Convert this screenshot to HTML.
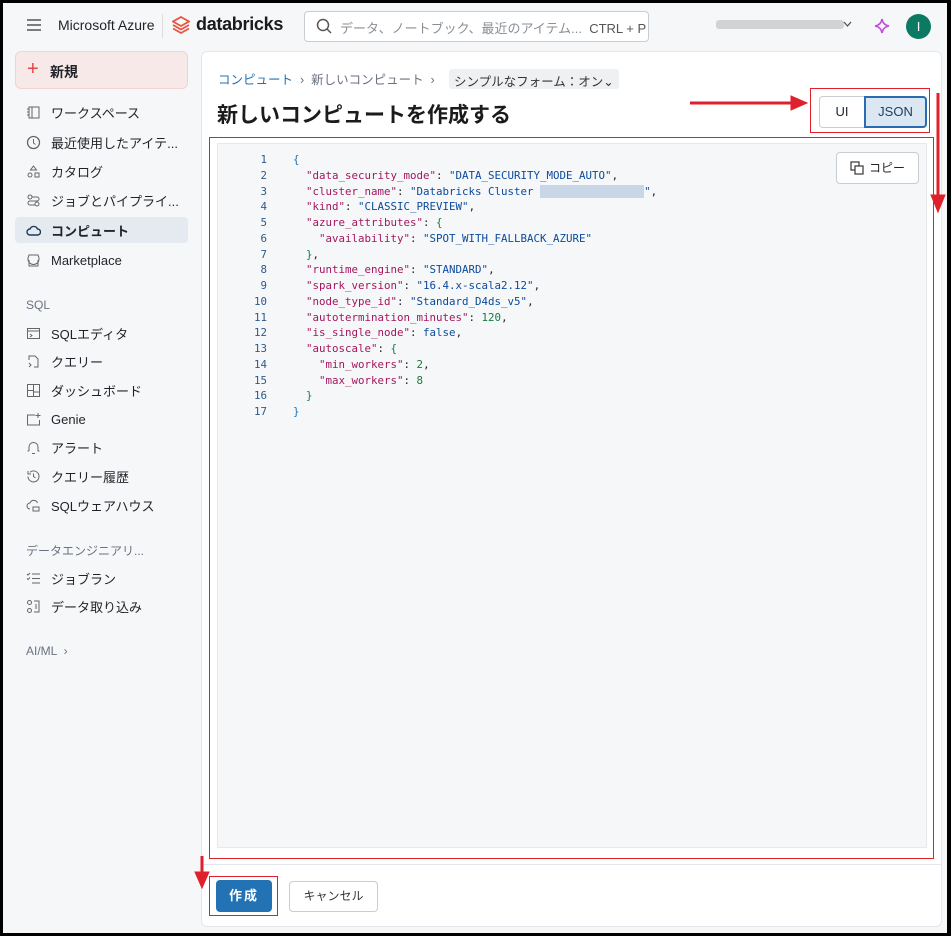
<!DOCTYPE html>
<html><head><meta charset="utf-8"><style>
*{box-sizing:border-box;margin:0;padding:0}
body{width:951px;height:936px;background:#000;font-family:"Liberation Sans","Noto Sans CJK JP",sans-serif;position:relative;overflow:hidden;color:#1f2328}
.frame{position:absolute;left:3px;top:3px;width:944px;height:930px;background:#f6f7f9}
.a{position:absolute}
.nav{position:absolute;left:26px;font-size:13px;color:#1f2328;display:flex;align-items:center;gap:10px;height:28px}
.nav svg{width:15px;height:15px;flex:none}
.sec{position:absolute;left:26px;font-size:12px;color:#6b7280}
.code{position:absolute;left:217px;top:143px;width:710px;height:705px;background:#f6f7f9;border:1px solid #e6e8eb}
.ln{position:absolute;left:0;width:50px;text-align:right;color:#2b5a8c}
.cl{position:absolute;left:76px;white-space:pre;color:#1f2328}
.k{color:#a3175e}.s{color:#0b4a9a}.n{color:#167a3f}.b{color:#2272b4}
.red{position:absolute;border:1px solid #e0202a}
</style></head><body>
<div class="frame"></div>
<svg class="a" style="left:27px;top:19px" width="14" height="12"><path d="M0 1h14M0 6h14M0 11h14" stroke="#555" stroke-width="1.5"/></svg>
<div class="a" style="left:58px;top:17px;font-size:14px">Microsoft Azure</div>
<div class="a" style="left:162px;top:14px;width:1px;height:24px;background:#ddd"></div>
<svg class="a" style="left:172px;top:16px" width="18" height="19" viewBox="0 0 18 19"><path d="M9 1L17 5.5 9 10 1 5.5z M1 9l8 4.5 8-4.5 M1 12.5l8 4.5 8-4.5" fill="none" stroke="#e8543f" stroke-width="1.8"/></svg>
<div class="a" style="left:196px;top:14px;font-size:18px;font-weight:bold;color:#1b1b1b;letter-spacing:-.3px">databricks</div>
<div class="a" style="left:304px;top:11px;width:345px;height:31px;border:1px solid #c8cdd3;border-radius:4px;background:#fff"></div>
<svg class="a" style="left:316px;top:18px" width="17" height="17"><circle cx="7" cy="7" r="5.5" fill="none" stroke="#555" stroke-width="1.5"/><path d="M11 11l4 4" stroke="#555" stroke-width="1.5"/></svg>
<div class="a" style="left:340px;top:18px;font-size:13px;color:#8a8f96">データ、ノートブック、最近のアイテム...&nbsp; <span style="color:#555">CTRL + P</span></div>
<div class="a" style="left:716px;top:20px;width:128px;height:9px;background:#bbb;opacity:.6;border-radius:3px"></div>
<svg class="a" style="left:843px;top:21px" width="9" height="7"><path d="M1 1l3.5 4L8 1" fill="none" stroke="#555" stroke-width="1.3"/></svg>
<svg class="a" style="left:874px;top:18px" width="16" height="16"><path d="M8 1Q9 7 15 8Q9 9 8 15Q7 9 1 8Q7 7 8 1z" fill="none" stroke="#c44ce0" stroke-width="1.6"/></svg>
<div class="a" style="left:906px;top:14px;width:25px;height:25px;border-radius:50%;background:#0c7a62;color:#fff;font-size:13px;text-align:center;line-height:25px">I</div>
<div class="a" style="left:15px;top:51px;width:173px;height:38px;background:#f8e9e9;border:1px solid #f2d3d3;border-radius:6px"></div>
<div class="a" style="left:27px;top:58px;font-size:20px;color:#e0454a">+</div>
<div class="a" style="left:50px;top:62px;font-size:14px;font-weight:bold">新規</div>
<div class="a" style="left:15px;top:217px;width:173px;height:26px;background:#e5eaf0;border-radius:4px"></div>
<div class="nav" style="top:98px"><svg viewBox="0 0 15 15"><rect x="3" y="2" width="10" height="11" fill="none" stroke="#666"/><path d="M6 2v11M1 4h2M1 7h2M1 10h2" stroke="#666"/></svg>ワークスペース</div>
<div class="nav" style="top:128px"><svg viewBox="0 0 15 15"><circle cx="7.5" cy="7.5" r="6" fill="none" stroke="#666" stroke-width="1.3"/><path d="M7.5 4v4l2 1.5" fill="none" stroke="#666"/></svg>最近使用したアイテ...</div>
<div class="nav" style="top:157px"><svg viewBox="0 0 15 15"><path d="M7.5 2l3 4h-6z" fill="none" stroke="#666"/><circle cx="4" cy="11" r="2" fill="none" stroke="#666"/><rect x="9" y="9" width="4" height="4" fill="none" stroke="#666"/></svg>カタログ</div>
<div class="nav" style="top:186px"><svg viewBox="0 0 15 15"><circle cx="4" cy="4" r="2" fill="none" stroke="#666"/><circle cx="11" cy="11" r="2" fill="none" stroke="#666"/><path d="M6 4h5a2 2 0 0 1 0 4H4a2 2 0 0 0 0 4h5" fill="none" stroke="#666"/></svg>ジョブとパイプライ...</div>
<div class="nav" style="top:216px;font-weight:bold"><svg viewBox="0 0 15 15"><path d="M4 12a3 3 0 0 1 0-6 4 4 0 0 1 7.5 0 3 3 0 0 1 0 6z" fill="none" stroke="#1e3b5a" stroke-width="1.4"/></svg>コンピュート</div>
<div class="nav" style="top:246px"><svg viewBox="0 0 15 15"><path d="M2 5l1-3h9l1 3v1a2 2 0 0 1-11 0zM3 7v6h9V7" fill="none" stroke="#666"/></svg>Marketplace</div>
<div class="sec" style="top:298px">SQL</div>
<div class="nav" style="top:319px"><svg viewBox="0 0 15 15"><rect x="1.5" y="2.5" width="12" height="10" fill="none" stroke="#666"/><path d="M1.5 5h12M4 8l2 1.5-2 1.5" fill="none" stroke="#666"/></svg>SQLエディタ</div>
<div class="nav" style="top:347px"><svg viewBox="0 0 15 15"><path d="M3 6V2h6l3 3v8H8M3 9l2 2-2 2" fill="none" stroke="#666"/></svg>クエリー</div>
<div class="nav" style="top:376px"><svg viewBox="0 0 15 15"><rect x="1.5" y="1.5" width="12" height="12" fill="none" stroke="#666"/><path d="M7.5 1.5v12M1.5 7.5h6M7.5 9h6" stroke="#666"/></svg>ダッシュボード</div>
<div class="nav" style="top:405px"><svg viewBox="0 0 15 15"><path d="M9 3H1.5v10h12V8M12 1v5M9.5 3.5h5" fill="none" stroke="#666"/></svg>Genie</div>
<div class="nav" style="top:433px"><svg viewBox="0 0 15 15"><path d="M3 11V7a4.5 4.5 0 0 1 9 0v4h1.5M1.5 11H3M6 13.5h3" fill="none" stroke="#666"/></svg>アラート</div>
<div class="nav" style="top:462px"><svg viewBox="0 0 15 15"><path d="M2 7.5a5.5 5.5 0 1 0 2-4.3M2 2v3h3M7.5 4.5v3l2 1.5" fill="none" stroke="#666"/></svg>クエリー履歴</div>
<div class="nav" style="top:491px"><svg viewBox="0 0 15 15"><path d="M4 11a3 3 0 0 1 0-6 4 4 0 0 1 7.5 0" fill="none" stroke="#666"/><rect x="7" y="9" width="6" height="4" fill="none" stroke="#666"/></svg>SQLウェアハウス</div>
<div class="sec" style="top:542px">データエンジニアリ...</div>
<div class="nav" style="top:564px"><svg viewBox="0 0 15 15"><path d="M6 3h8M6 7.5h8M6 12h8M1 3l1 1 2-2M1 7.5l1 1 2-2" fill="none" stroke="#666"/></svg>ジョブラン</div>
<div class="nav" style="top:592px"><svg viewBox="0 0 15 15"><circle cx="3.5" cy="3.5" r="2" fill="none" stroke="#666"/><circle cx="3.5" cy="11.5" r="2" fill="none" stroke="#666"/><path d="M8 2h5v11H8M10 5v5" fill="none" stroke="#666"/></svg>データ取り込み</div>
<div class="sec" style="top:644px">AI/ML &nbsp;›</div>
<div class="a" style="left:201px;top:51px;width:741px;height:876px;background:#fff;border:1px solid #e3e6ea;border-radius:6px"></div>
<div class="a" style="left:218px;top:69px;font-size:12.5px;color:#6b7280"><span style="color:#2272b4">コンピュート</span> &nbsp;›&nbsp; 新しいコンピュート &nbsp;›&nbsp;</div>
<div class="a" style="left:449px;top:69px;height:20px;padding:2px 5px;background:#eef0f2;border-radius:3px;font-size:12.5px;color:#333">シンプルなフォーム：オン⌄</div>
<div class="a" style="left:217px;top:99px;font-size:21px;font-weight:bold;color:#1b1b1b">新しいコンピュートを作成する</div>
<div class="a" style="left:819px;top:96px;width:46px;height:32px;border:1px solid #c8cdd3;border-radius:4px 0 0 4px;font-size:13px;text-align:center;line-height:30px">UI</div>
<div class="a" style="left:864px;top:96px;width:63px;height:32px;border:2px solid #2b6cb0;background:#dbe7f3;border-radius:0 4px 4px 0;font-size:13px;text-align:center;line-height:28px;color:#1d3f66">JSON</div>
<div class="code">
<div class="a" style="left:618px;top:8px;width:83px;height:32px;border:1px solid #c8cdd3;border-radius:4px;background:#fff;font-size:12px;line-height:30px;padding-left:32px">コピー</div>
<svg class="a" style="left:632px;top:17px" width="14" height="14"><rect x="1" y="1" width="8" height="8" fill="none" stroke="#444" stroke-width="1.3"/><rect x="5" y="5" width="8" height="8" fill="#fff" stroke="#444" stroke-width="1.3"/></svg>
</div>
<div id="c" class="a" style="left:217px;top:143px;font-family:'DejaVu Sans Mono','Liberation Mono',monospace;font-size:10.8px"></div>
<script>
var L=['<span class="b">{</span>',
'  <span class="k">"data_security_mode"</span>: <span class="s">"DATA_SECURITY_MODE_AUTO"</span>,',
'  <span class="k">"cluster_name"</span>: <span class="s">"Databricks Cluster <span style="background:#c9d6e8;color:#c9d6e8">0000-00-00 00-00</span>"</span>,',
'  <span class="k">"kind"</span>: <span class="s">"CLASSIC_PREVIEW"</span>,',
'  <span class="k">"azure_attributes"</span>: <span class="n">{</span>',
'    <span class="k">"availability"</span>: <span class="s">"SPOT_WITH_FALLBACK_AZURE"</span>',
'  <span class="n">}</span>,',
'  <span class="k">"runtime_engine"</span>: <span class="s">"STANDARD"</span>,',
'  <span class="k">"spark_version"</span>: <span class="s">"16.4.x-scala2.12"</span>,',
'  <span class="k">"node_type_id"</span>: <span class="s">"Standard_D4ds_v5"</span>,',
'  <span class="k">"autotermination_minutes"</span>: <span class="n">120</span>,',
'  <span class="k">"is_single_node"</span>: <span class="s">false</span>,',
'  <span class="k">"autoscale"</span>: <span class="n">{</span>',
'    <span class="k">"min_workers"</span>: <span class="n">2</span>,',
'    <span class="k">"max_workers"</span>: <span class="n">8</span>',
'  <span class="n">}</span>',
'<span class="b">}</span>'];
var h='';for(var i=0;i<L.length;i++){var t=153+i*15.75-143;h+='<div class="ln" style="top:'+t+'px">'+(i+1)+'</div><div class="cl" style="top:'+t+'px">'+L[i]+'</div>';}
document.getElementById('c').innerHTML=h;
</script>
<div class="a" style="left:201px;top:864px;width:741px;height:1px;background:#e3e6ea"></div>
<div class="a" style="left:216px;top:880px;width:56px;height:32px;background:#2272b4;border-radius:4px;color:#fff;font-size:13px;font-weight:bold;text-align:center;line-height:32px;letter-spacing:2px">作成</div>
<div class="a" style="left:289px;top:881px;width:89px;height:31px;border:1px solid #c8cdd3;border-radius:4px;font-size:12px;text-align:center;line-height:29px;color:#333">キャンセル</div>
<div class="red" style="left:810px;top:88px;width:120px;height:45px"></div>
<div class="red" style="left:209px;top:137px;width:725px;height:722px"></div>
<div class="red" style="left:209px;top:876px;width:69px;height:40px"></div>
<svg class="a" style="left:0;top:0" width="951" height="936"><g fill="#e0202a" stroke="#e0202a">
<path d="M690 103H795" stroke-width="3"/><path d="M807 103L791 96V110z"/>
<path d="M938 93V195" stroke-width="3"/><path d="M938 212L931 195H945z"/>
<path d="M202 856V873" stroke-width="3"/><path d="M202 888L195 872H209z"/></g></svg>
</body></html>
